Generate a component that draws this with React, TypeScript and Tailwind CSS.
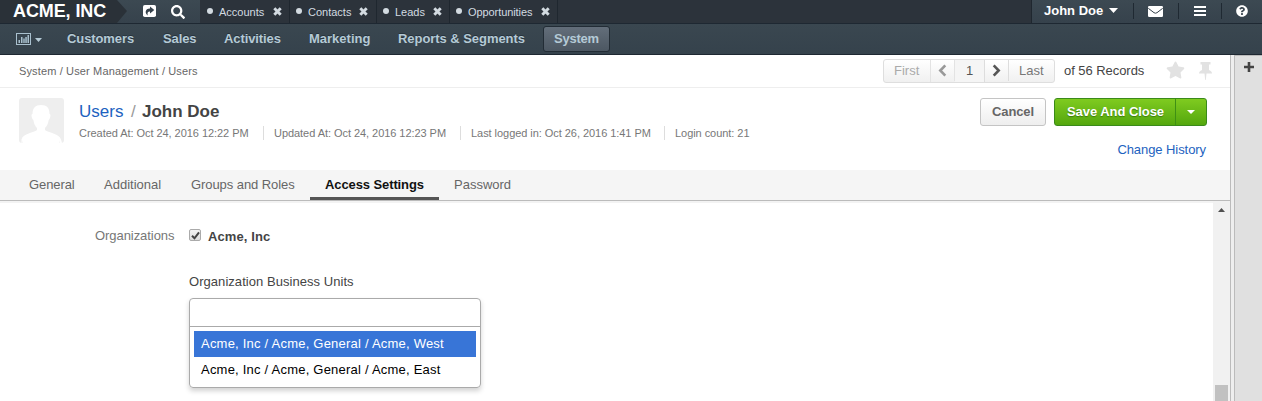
import React from "react";
import { FaSearch, FaQuestionCircle, FaStar } from "react-icons/fa";

function Caret({ className }: { className: string }) {
  return (
    <svg viewBox="0 0 8 4" preserveAspectRatio="none" className={className} fill="currentColor">
      <path d="M0 0h8L4 4z" />
    </svg>
  );
}

function ShareIcon() {
  return (
    <svg viewBox="0 0 13 12" className="h-3 w-[13px]">
      <rect width="13" height="12" rx="1.800" fill="#fff" />
      <path d="M7 1.500 11.300 4.900 7 8.400V6.500C5.200 6.400 4.100 7.200 4.700 10.400 1.800 8.300 1.700 3.500 7 3.400z" fill="#36424c" />
    </svg>
  );
}

function ChartIcon() {
  return (
    <svg viewBox="0 0 15 12" className="h-3 w-[15px]">
      <rect x=".5" y=".5" width="14" height="11" fill="none" stroke="#a9c0ce" />
      <path d="M2.500 7h1.500v3H2.500zM5 4h1.500v6H5zM7.300 5.500h1.400v4.500H7.300zM9.300 4h1.500v6H9.300zM11.500 2H13v8h-1.500z" fill="#a9c0ce" />
    </svg>
  );
}

function CloseIcon() {
  return (
    <svg viewBox="0 0 9 9" className="mb-px size-[9px]">
      <path d="M1.300 1.300 7.700 7.700M7.700 1.300 1.300 7.700" stroke="currentColor" strokeWidth="2.900" />
    </svg>
  );
}

function EnvelopeIcon() {
  return (
    <svg viewBox="0 0 15 11" className="ml-[14px] mr-px h-[11px] w-[15px]" fill="#fff">
      <path d="M1.200 0h12.600A1.200 1.200 0 0 1 15 1.200v8.600a1.200 1.200 0 0 1-1.200 1.200H1.200A1.200 1.200 0 0 1 0 9.800V1.200A1.200 1.200 0 0 1 1.200 0z" />
      <path d="M.3 2.300 6 6.700q1.500 1 3 0l5.700-4.400" fill="none" stroke="#36424c" strokeWidth="1" />
    </svg>
  );
}

function BarsIcon() {
  return (
    <svg viewBox="0 0 12 10" className="mb-px ml-[15px] h-[10px] w-3" fill="#fff">
      <path d="M0 0h12v2H0zM0 4h12v2H0zM0 8h12v2H0z" />
    </svg>
  );
}

function PinIcon() {
  return (
    <svg viewBox="0 0 13 18" className="ml-[14px] mt-[3px] h-[18px] w-[13px]" fill="#e2e2e2">
      <path d="M1.500 0h10v2.500H10V8c2 .8 3 2 3 3.500H7.500L6.800 18h-.6l-.7-6.500H0C0 10 1 8.800 3 8V2.500H1.500z" />
    </svg>
  );
}

function Chevron({ left }: { left?: boolean }) {
  return (
    <svg viewBox="0 0 9 13" className="h-[13px] w-[9px]">
      <path d={left ? "M7.300 1.300 2.300 6.500l5 5.200" : "M1.700 1.300l5 5.200-5 5.200"} fill="none" stroke="currentColor" strokeWidth="2.600" />
    </svg>
  );
}

const pinned = [
  { label: "Accounts", box: "w-[90px] pl-[7px]", text: "w-[54px]" },
  { label: "Contacts", box: "w-[87px] pl-[6px]", text: "w-[51px]" },
  { label: "Leads", box: "w-[73px] pl-[6px]", text: "w-[38px]" },
  { label: "Opportunities", box: "w-[108px] pl-[6px]", text: "w-[73px] tracking-[-0.08px]" },
];

const menu = [
  { label: "Customers", box: "w-[96px] tracking-[-0.1px]" },
  { label: "Sales", box: "w-[61px] tracking-[-0.1px]" },
  { label: "Activities", box: "w-[85px] tracking-[-0.1px]" },
  { label: "Marketing", box: "w-[89px]" },
  { label: "Reports & Segments", box: "w-[145px] tracking-[-0.05px]" },
];

const tabs = [
  { label: "General", box: "w-[75px] tracking-[-0.1px]" },
  { label: "Additional", box: "w-[87px]" },
  { label: "Groups and Roles", box: "w-[119px] tracking-[-0.07px]" },
];

function TopBar() {
  return (
    <header className="flex h-6 border-b border-[#1e2832] bg-[#2c333b]">
      <div className="flex w-[200px] bg-linear-to-b from-[#3c4952] to-[#36424c]">
        <div className="w-[127px] bg-[#2a3138] pl-[13px] [clip-path:polygon(0_0,117px_0,100%_11px,117px_100%,0_100%)]">
          <span className="whitespace-nowrap text-[18px] font-bold leading-[21px] tracking-[-0.1px] text-white">ACME, INC</span>
        </div>
        <div className="flex pl-4 pt-[5px]">
          <ShareIcon />
          <FaSearch className="ml-[15px] size-[14px] text-white" />
        </div>
      </div>
      {pinned.map((p) => (
        <div key={p.label} className={`${p.box} flex h-[23px] items-center border-r border-[#1f272f] text-[11px] text-[#d3dbe1]`}>
          <i className="mb-px mr-[6px] size-[6px] rounded-full bg-[#d3dbe1]" />
          <span className={`${p.text} whitespace-nowrap leading-[22px]`}>{p.label}</span>
          <CloseIcon />
        </div>
      ))}
      <div className="ml-auto flex w-[231px] items-center border-l border-[#1f272f] bg-linear-to-b from-[#3c4952] to-[#36424c] text-white">
        <span className="ml-[12px] w-[65px] whitespace-nowrap pb-[2px] text-[13px] font-bold leading-[21px]">John Doe</span>
        <Caret className="mb-[2px] h-[5px] w-[9px]" />
        <div className="mb-px ml-[15px] h-4 w-px bg-[#1f2932]" />
        <EnvelopeIcon />
        <div className="mb-px ml-[14px] h-4 w-px bg-[#1f2932]" />
        <BarsIcon />
        <div className="mb-px ml-[15px] h-4 w-px bg-[#1f2932]" />
        <FaQuestionCircle className="mb-[2px] ml-[14px] size-3" />
      </div>
    </header>
  );
}

function MainMenu() {
  return (
    <nav className="flex h-[31px] border-b border-[#1e2832] bg-linear-to-b from-[#3a4750] to-[#35424c] text-[13px] font-bold text-[#b5cad6]">
      <div className="flex w-[67px] pl-4 pt-[9px]">
        <ChartIcon />
        <Caret className="ml-1 mt-[5px] h-[4px] w-[7px]" />
      </div>
      {menu.map((m) => (
        <span key={m.label} className={`${m.box} whitespace-nowrap leading-[29px] [text-shadow:0_-1px_0_#26323c]`}>{m.label}</span>
      ))}
      <span className="mt-[2px] h-[26px] w-[67px] rounded-[3px] border border-[#222c35] bg-linear-to-b from-[#636e7a] to-[#4c5762] pl-[10px] leading-[23px] tracking-[-0.25px]">System</span>
    </nav>
  );
}

function Pager() {
  return (
    <div className="flex h-6 w-[172px] overflow-hidden rounded-[3px] border border-[#dedede] bg-linear-to-b from-white to-[#f0f0f0] text-[13px] leading-[22px] text-[#777]">
      <span className="w-[47px] border-r border-[#e3e3e3] pl-[10px] text-[#aaa]">First</span>
      <span className="flex h-[21px] w-6 items-center justify-center border-r border-[#e3e3e3] text-[#999]"><Chevron left /></span>
      <span className="w-[30px] border-r border-[#ddd] bg-[#f5f5f5] text-center text-[#555]">1</span>
      <span className="flex h-[21px] w-6 items-center justify-center border-r border-[#ddd] text-[#555]"><Chevron /></span>
      <span className="pl-[10px]">Last</span>
    </div>
  );
}

function PageHeader() {
  return (
    <>
      <div className="flex h-[33px] border-b border-[#eee] pl-[19px]">
        <span className="w-[864px] whitespace-nowrap text-[11px] leading-[33px] tracking-[0.14px] text-[#666]">System / User Management / Users</span>
        <div className="flex items-start pt-1">
          <Pager />
          <span className="ml-[9px] w-[102px] whitespace-nowrap text-[13px] leading-6 tracking-[-0.05px] text-[#444]">of 56 Records</span>
          <FaStar className="mt-[2px] h-[18px] w-[19px] text-[#e2e2e2]" />
          <PinIcon />
        </div>
      </div>
      <div className="flex h-[82px] pl-[19px] pt-[10px]">
        <svg viewBox="0 0 45 45" className="size-[45px]">
          <rect width="45" height="45" rx="3" fill="#eee" />
          <path d="M22 7c6 0 8.500 3 8.500 9 2 0 .5 5-.8 6-.7 4-1.700 6-3.700 8v2c3 3 14 3 16 9.500l1 3.500h-2l-.5-3V45H4v-3l-.5 3h-1v-3.500C4 35 15 35 18 32v-2c-2-2-3-4-3.600-8-1.400-1-2.900-6-.9-6 0-6 3-9 8.500-9z" fill="#fff" />
        </svg>
        <div className="ml-[15px] w-[901px] pt-px">
          <div className="flex whitespace-nowrap text-[17px] leading-[26px]">
            <a className="w-[52px] text-[#1d62c0]">Users</a>
            <span className="w-[11px] text-[#999]">/</span>
            <b className="text-[#444]">John Doe</b>
          </div>
          <div className="-mt-px flex h-[18px] items-center whitespace-nowrap text-[11px] leading-[18px] tracking-[-0.05px] text-[#777]">
            <span className="w-[184px]">Created At: Oct 24, 2016 12:22 PM</span>
            <span className="h-[14px] w-[11px] border-l border-[#ddd]" />
            <span className="w-[186px]">Updated At: Oct 24, 2016 12:23 PM</span>
            <span className="h-[14px] w-[11px] border-l border-[#ddd]" />
            <span className="w-[193px]">Last logged in: Oct 26, 2016 1:41 PM</span>
            <span className="h-[14px] w-[11px] border-l border-[#ddd]" />
            <span>Login count: 21</span>
          </div>
        </div>
        <div className="w-[227px]">
          <div className="flex text-[13px] font-bold leading-[26px]">
            <button className="h-7 w-[66px] rounded-[3px] border border-[#c4c4c4] bg-linear-to-b from-white to-[#eee] tracking-[-0.1px] text-[#666]">Cancel</button>
            <div className="ml-2 flex h-7 w-[153px] rounded-[3px] border border-[#3a8a1a] bg-linear-to-b from-[#7fcb20] to-[#54a70d] text-white">
              <button className="w-[121px] border-r border-[#3f9014] pl-px tracking-[-0.05px] [text-shadow:0_1px_1px_#3c7d0a]">Save And Close</button>
              <button className="flex flex-1 items-center justify-center"><Caret className="h-1 w-2" /></button>
            </div>
          </div>
          <a className="mt-[14px] block pr-px text-right text-[13px] leading-5 tracking-[-0.07px] text-[#1d62c0]">Change History</a>
        </div>
      </div>
      <div className="flex h-[31px] border-b border-[#bbb] bg-[#f5f5f5] pl-[29px] text-[13px] leading-[29px] text-[#666]">
        {tabs.map((t) => (
          <span key={t.label} className={`${t.box} whitespace-nowrap`}>{t.label}</span>
        ))}
        <b className="h-[30px] w-[129px] whitespace-nowrap border-b-[3px] border-[#555] pl-[15px] tracking-[-0.1px] text-[#111]">Access Settings</b>
        <span className="pl-[15px]">Password</span>
      </div>
    </>
  );
}

function AccessForm() {
  return (
    <div className="flex flex-1">
      <section className="flex w-[1213px] border-t-2 border-[#f3f3f3] pl-[95px] text-[13px] text-[#444]">
        <span className="w-[94px] whitespace-nowrap pt-[23px] leading-5 tracking-[-0.06px] text-[#777]">Organizations</span>
        <div className="w-[292px]">
          <div className="flex h-[46px] items-start pt-[26px]">
            <span className="mr-[7px] flex size-3 shrink-0 items-center justify-center rounded-[2px] border border-[#aaa] bg-linear-to-b from-[#f4f4f4] to-[#ddd]">
              <svg viewBox="0 0 9 9" className="size-[9px]"><path d="M1 4.800 3.500 7.300 8 1.300" fill="none" stroke="#444" strokeWidth="2" /></svg>
            </span>
            <b className="-mt-[2px] whitespace-nowrap leading-5 tracking-[0.1px]">Acme, Inc</b>
          </div>
          <p className="mt-[23px] whitespace-nowrap leading-5 tracking-[0.05px]">Organization Business Units</p>
          <div className="mt-[6px] h-[90px] rounded-[4px] border border-[#aaa] shadow-[0_3px_5px_rgba(0,0,0,.18)]">
            <div className="h-7 border-b border-[#aaa]" />
            <ul className="px-1 pt-1 tracking-[0.22px] text-black">
              <li className="h-[26px] whitespace-nowrap bg-[#3875d7] pl-[7px] leading-[25px] text-white">Acme, Inc / Acme, General / Acme, West</li>
              <li className="h-[26px] whitespace-nowrap pl-[7px] leading-[25px]">Acme, Inc / Acme, General / Acme, East</li>
            </ul>
          </div>
        </div>
      </section>
      <div className="flex w-[17px] flex-col items-center justify-between bg-[#f1f1f1] pt-[7px]">
        <Caret className="h-1 w-[7px] rotate-180 text-[#505050]" />
        <div className="h-4 w-[13px] bg-[#c1c1c1]" />
      </div>
    </div>
  );
}

export default function App() {
  return (
    <div className="flex h-[401px] w-[1262px] flex-col overflow-hidden bg-white font-['Liberation_Sans',Arial,sans-serif]">
      <TopBar />
      <MainMenu />
      <div className="flex flex-1">
        <main className="flex w-[1231px] flex-col border-r border-[#bbb]">
          <PageHeader />
          <AccessForm />
        </main>
        <div className="w-[3px] bg-[#eee]" />
        <aside className="flex flex-1 justify-center border-l border-t border-[#bbb] bg-[#e0e0e0] pt-[6px]">
          <svg viewBox="0 0 10 10" className="ml-px size-[10px]" fill="#444">
            <path d="M3.700 0h2.600v3.700H10v2.600H6.300V10H3.700V6.300H0V3.700h3.700z" />
          </svg>
        </aside>
      </div>
    </div>
  );
}
